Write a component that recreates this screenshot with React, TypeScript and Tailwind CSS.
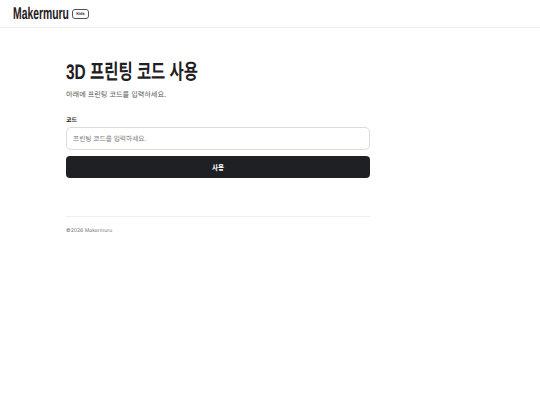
export default function App() {
  return (
    <div className="min-h-[405px] bg-white font-['Inter','Noto_Sans_CJK_KR',sans-serif] text-[#1f2023] antialiased [text-rendering:geometricPrecision]">
      <header className="flex h-7 items-center gap-[3px] border-b border-[#f0f0f0] pl-[13px]">
        <span className="block w-[56px] origin-left scale-x-[0.61] whitespace-nowrap font-['Liberation_Sans',sans-serif] text-[17px] font-bold leading-none">Makermuru</span>
        <span className="flex h-[10px] w-[17px] items-center justify-center rounded-[3px] border border-[#555] text-[4px] font-semibold leading-none">Kids</span>
      </header>
      <main className="ml-[66px] w-[304px] pt-[34px]">
        <h1 className="origin-left scale-x-[0.735] whitespace-nowrap font-['Liberation_Sans','Noto_Sans_CJK_KR',sans-serif] text-[21px] font-bold leading-[22px]">3D 프린팅 코드 사용</h1>
        <p className="mt-[5px] text-[7.15px] leading-[12px] text-[#555]">아래에 프린팅 코드를 입력하세요.</p>
        <label className="mt-[16px] block text-[6px] font-semibold leading-[8px]">코드</label>
        <div className="mt-[2px] flex h-[23px] items-center rounded-[5px] border border-[#dcdcdc] bg-white pl-[6px] pt-[2px] text-[6.7px] text-[#777]">프린팅 코드를 입력하세요.</div>
        <button className="mt-[6px] flex h-[22px] w-full items-center justify-center rounded-[4px] bg-[#1f2023] pt-[3px] text-[6.5px] font-semibold text-white">사용</button>
        <footer className="mt-[38px] border-t border-[#f0f0f0] pt-[10px] text-[5.1px] leading-[8px] text-[#777]">©2026 Makermuru</footer>
      </main>
    </div>
  );
}
